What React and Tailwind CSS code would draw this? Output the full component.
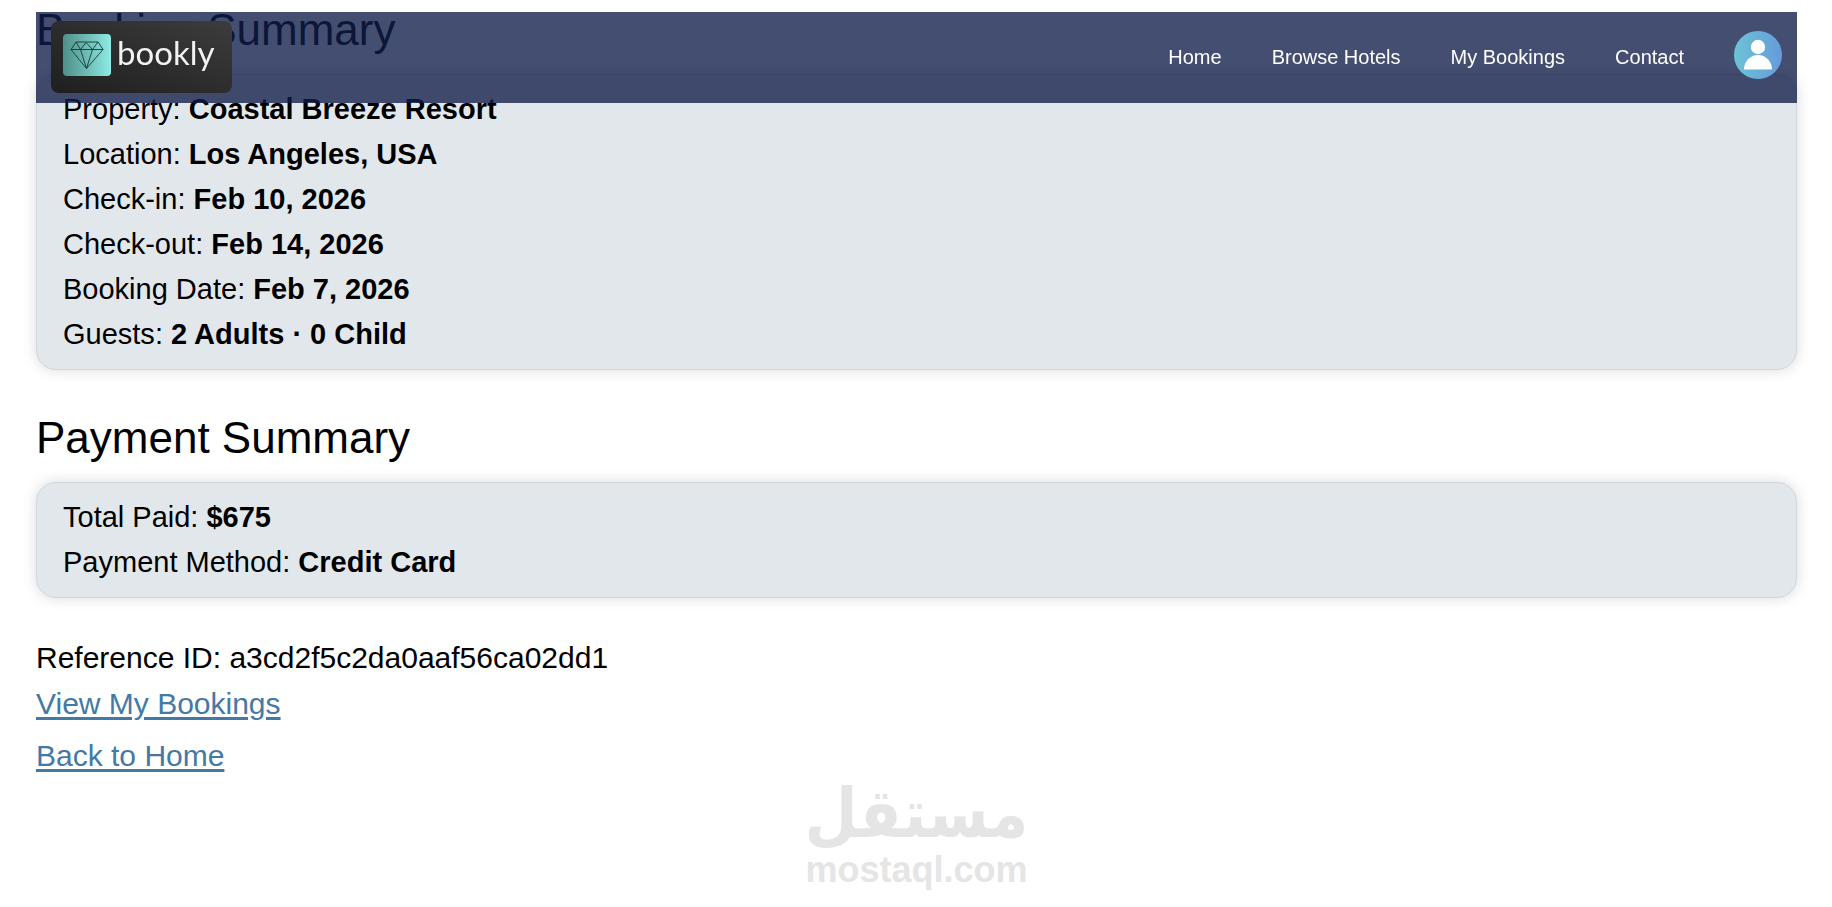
const bookingDetails = [
  { label: "Property", value: "Coastal Breeze Resort" },
  { label: "Location", value: "Los Angeles, USA" },
  { label: "Check-in", value: "Feb 10, 2026" },
  { label: "Check-out", value: "Feb 14, 2026" },
  { label: "Booking Date", value: "Feb 7, 2026" },
  { label: "Guests", value: "2 Adults · 0 Child" },
];

const paymentDetails = [
  { label: "Total Paid", value: "$675" },
  { label: "Payment Method", value: "Credit Card" },
];

const navLinks = ["Home", "Browse Hotels", "My Bookings", "Contact"];

const DiamondIcon = () => (
  <svg
    viewBox="0 0 48 42"
    className="h-[42px] w-12"
    fill="none"
    stroke="#173534"
    strokeWidth="0.9"
    strokeLinejoin="round"
    aria-hidden="true"
  >
    <path d="M13 8h22l5 7.500L23.500 34.500 8 15.500z" />
    <path d="M8 15.500h32M13 8l4.500 7.500 5.500-7 6.500 7 5.500-7.500M17.500 15.500l6 19 6-19" />
  </svg>
);

const Logo = () => (
  <a
    href="#home"
    className="flex h-[72px] items-start gap-1.5 rounded-lg bg-linear-to-tr from-[#1f1f1f] to-[#3c3c3c] pt-[13px] pr-[18px] pl-3"
  >
    <span className="rounded-sm bg-linear-to-r from-[#4f9089] to-[#8eebe5]">
      <DiamondIcon />
    </span>
    <span className="font-[Lato,sans-serif] text-[33px] leading-9 text-[#f2f2f2]">
      bookly
    </span>
  </a>
);

const Avatar = () => (
  <button type="button" aria-label="Account" className="mb-1 rounded-full">
    <svg viewBox="0 0 48 48" className="size-12" aria-hidden="true">
      <defs>
        <linearGradient id="avatar" x1="0" x2="1">
          <stop offset="0" stopColor="#6dc3d6" />
          <stop offset="1" stopColor="#659bdb" />
        </linearGradient>
      </defs>
      <circle cx="24" cy="24" r="24" fill="url(#avatar)" />
      <circle cx="24" cy="16" r="7.200" fill="#fff" />
      <path d="M10 38.500a14 14.500 0 0 1 28 0z" fill="#fff" />
    </svg>
  </button>
);

const Navbar = () => (
  <header className="fixed top-3 right-[35px] left-9 z-10 flex h-[91px] items-center justify-between bg-[#101c48]/78 px-[15px] pb-0.5">
    <Logo />
    <nav className="flex items-center gap-[50px] text-xl text-white">
      {navLinks.map((link) => (
        <a key={link} href="#">
          {link}
        </a>
      ))}
      <Avatar />
    </nav>
  </header>
);

const SummaryCard = ({ title, items }) => (
  <section>
    <h2 className="mb-4 text-[44px] leading-[56px]">{title}</h2>
    <div className="rounded-[20px] border border-[#d0d8dc] bg-[#e2e7eb] px-[26px] py-3 shadow-[0_0_14px_rgba(0,0,0,0.15)]">
      {items.map((item) => (
        <p key={item.label} className="text-[29px] leading-[45px]">
          {item.label}: <strong>{item.value}</strong>
        </p>
      ))}
    </div>
  </section>
);

const Watermark = () => (
  <footer className="flex flex-col items-center font-bold text-[#e5e5e5]">
    <span
      lang="ar"
      dir="rtl"
      className="font-['DejaVu_Sans_Condensed','DejaVu_Sans',sans-serif] text-[68px] leading-[76px]"
    >
      مستقل
    </span>
    <span className="text-4xl leading-9">mostaql.com</span>
  </footer>
);

const App = () => {
  return (
    <div className="min-h-screen bg-white pt-0.5 pr-[35px] pl-9 font-['Liberation_Sans',Arial,sans-serif] text-black">
      <Navbar />
      <main className="flex flex-col gap-10">
        <SummaryCard title="Booking Summary" items={bookingDetails} />
        <SummaryCard title="Payment Summary" items={paymentDetails} />
        <div className="text-[30px] leading-10 text-[#4479a6]">
          <p className="text-black">Reference ID: a3cd2f5c2da0aaf56ca02dd1</p>
          <p className="mt-1.5">
            <a href="#bookings" className="underline decoration-3 underline-offset-3">
              View My Bookings
            </a>
          </p>
          <p className="mt-3">
            <a href="#home" className="underline decoration-3 underline-offset-3">
              Back to Home
            </a>
          </p>
        </div>
      </main>
      <Watermark />
    </div>
  );
};

export default App;
